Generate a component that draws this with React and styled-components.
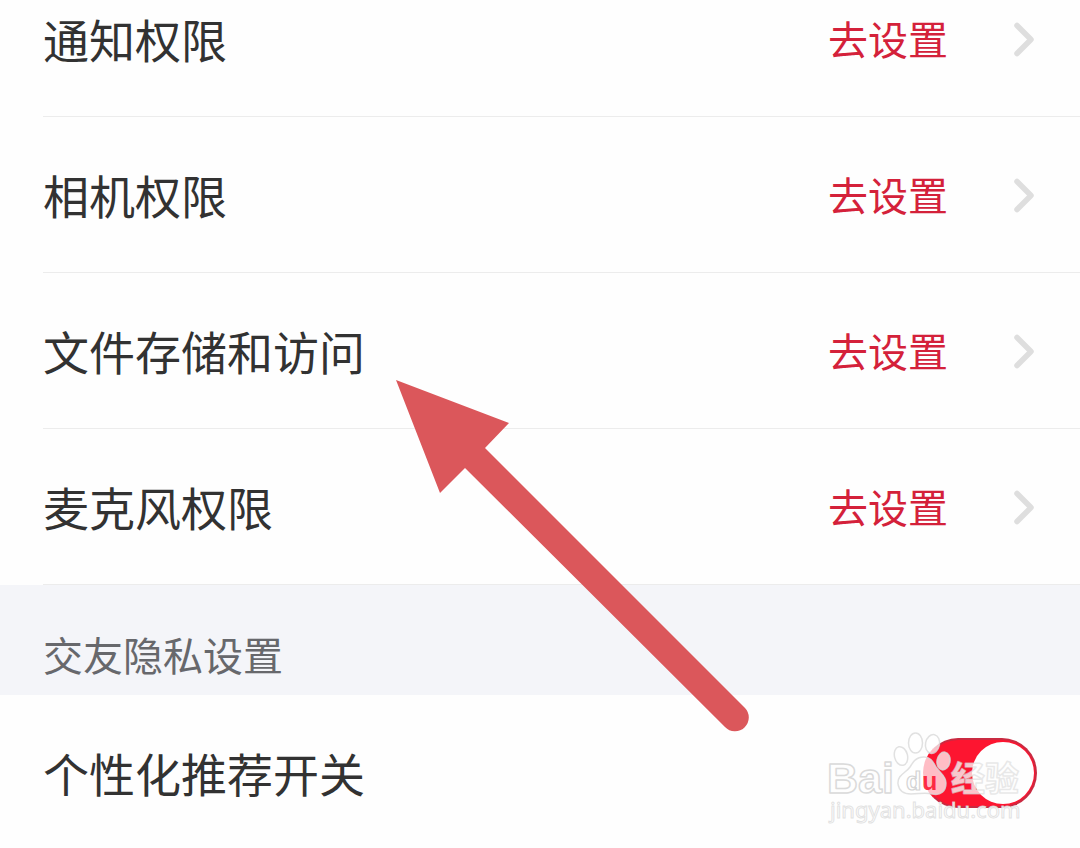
import React from "react";
import styled, { createGlobalStyle } from "styled-components";

const GlobalStyle = createGlobalStyle`
  * { box-sizing: border-box; }
  body {
    margin: 0;
    background: #fefefe;
    font-family: "Noto Sans CJK SC", sans-serif;
    color: #323232;
    overflow: hidden;
  }
`;

const Page = styled.main`
  position: relative;
  width: 100%;
  min-height: 100vh;
  overflow: hidden;
`;

const List = styled.ul`
  list-style: none;
  margin: 0;
  padding: 0 0 0 43px;
`;

const PermissionList = styled(List)`
  margin-top: -39px;
`;

const Row = styled.li`
  display: flex;
  align-items: center;
  justify-content: space-between;
  height: 156px;
  padding-right: 43px;
  border-bottom: 1px solid ${(p) => (p.$divided ? "#ececec" : "transparent")};
`;

const Label = styled.label`
  padding-bottom: 2px;
  font-size: 46px;
  line-height: 64px;
`;

const ActionButton = styled.button`
  display: flex;
  align-items: center;
  gap: 65px;
  padding: 0;
  border: 0;
  background: none;
  color: #d4213a;
  font-family: inherit;
  font-size: 40px;
  line-height: 56px;
  cursor: pointer;
`;

const ActionText = styled.span`
  padding-bottom: 2px;
`;

const SectionHeader = styled.h2`
  margin: 0;
  padding: 41px 43px 13px;
  background: #f4f5f9;
  color: #67686c;
  font-size: 40px;
  font-weight: 400;
  line-height: 56px;
`;

const Switch = styled.input`
  appearance: none;
  display: flex;
  align-items: center;
  justify-content: flex-end;
  width: 114px;
  height: 70px;
  margin: 0;
  padding: 0 1px;
  border: 2px solid #c92a41;
  border-left-color: #fd1530;
  border-radius: 35px;
  background: #fd1530;
  cursor: pointer;

  &::before {
    content: "";
    width: 62px;
    height: 62px;
    border-radius: 50%;
    background: #fefefe;
  }

  &:not(:checked) {
    justify-content: flex-start;
    background: #dddddd;
    border-color: #dddddd;
  }
`;

const PointerArrow = styled.svg`
  position: absolute;
  left: 390px;
  top: 374px;
  pointer-events: none;
`;

const Watermark = styled.svg`
  position: absolute;
  right: 50px;
  top: 724px;
  pointer-events: none;
`;

function Chevron() {
  return (
    <svg width="24" height="36" viewBox="0 0 24 36" fill="none" aria-hidden="true">
      <path d="M4 4.500L18 18.500L4 32.500" stroke="#dedede" strokeWidth="5.500" strokeLinecap="round" strokeLinejoin="round" />
    </svg>
  );
}

const permissions = [
  { id: "notify", label: "通知权限" },
  { id: "camera", label: "相机权限" },
  { id: "storage", label: "文件存储和访问" },
  { id: "mic", label: "麦克风权限" },
];

function BaiduMark() {
  return (
    <Watermark width="210" height="106" viewBox="820 724 210 106" role="img" aria-label="Baidu 经验">
      <g fill="#ffffff" fillOpacity="0.72" stroke="#dadada" strokeOpacity="0.8" strokeWidth="1.500">
        <ellipse cx="901" cy="756" rx="6.500" ry="9.500" transform="rotate(-14 901 756)" />
        <ellipse cx="915.500" cy="743" rx="7" ry="10" />
        <ellipse cx="932.500" cy="744" rx="7" ry="9.500" transform="rotate(12 932.500 744)" />
        <ellipse cx="943.500" cy="761" rx="6.500" ry="9" transform="rotate(10 943.500 761)" />
        <path d="M924 757c-8 0-11 5-14 10-4 6-13 8-12 17 1 7 6 10 13 10 8 0 14-2 21 0 9 2 14-3 14-11 0-7-6-10-10-16-3-5-5-10-12-10z" />
      </g>
      <g fill="#ffffff" fillOpacity="0.75" stroke="#dadada" strokeWidth="1.500" strokeLinejoin="round" fontWeight="700">
        <text x="827" y="793" fontFamily="Liberation Sans, sans-serif" fontSize="43">Bai</text>
        <text x="951" y="791" fontFamily="Noto Sans CJK SC, sans-serif" fontSize="34" strokeOpacity="0.6">经验</text>
      </g>
      <g fontFamily="Liberation Sans, sans-serif" fontSize="25" fontWeight="700">
        <text x="906" y="790" fill="#ffffff" stroke="#d4d4d4" strokeWidth="1.200">d</text>
        <text x="922" y="790" fill="#fd1530" fillOpacity="0.9">u</text>
      </g>
      <text x="830" y="818" fill="#ffffff" fillOpacity="0.9" stroke="#dadada" strokeOpacity="0.8" strokeWidth="1" fontFamily="Noto Sans, sans-serif" fontSize="22">jingyan.baidu.com</text>
    </Watermark>
  );
}

export default function App() {
  return (
    <>
      <GlobalStyle />
      <Page>
        <PermissionList>
          {permissions.map((item) => (
            <Row key={item.id} $divided>
              <Label htmlFor={item.id}>{item.label}</Label>
              <ActionButton id={item.id} type="button">
                <ActionText>去设置</ActionText>
                <Chevron />
              </ActionButton>
            </Row>
          ))}
        </PermissionList>
        <SectionHeader>交友隐私设置</SectionHeader>
        <List>
          <Row>
            <Label htmlFor="recommend">个性化推荐开关</Label>
            <Switch id="recommend" type="checkbox" role="switch" defaultChecked />
          </Row>
        </List>
        <PointerArrow width="366" height="366" viewBox="390 374 366 366" aria-hidden="true">
          <path d="M396 380L509 423L485 448L745 708A13.500 13.500 0 0 1 725 727L465 468L440 493Z" fill="#db575b" />
        </PointerArrow>
        <BaiduMark />
      </Page>
    </>
  );
}
